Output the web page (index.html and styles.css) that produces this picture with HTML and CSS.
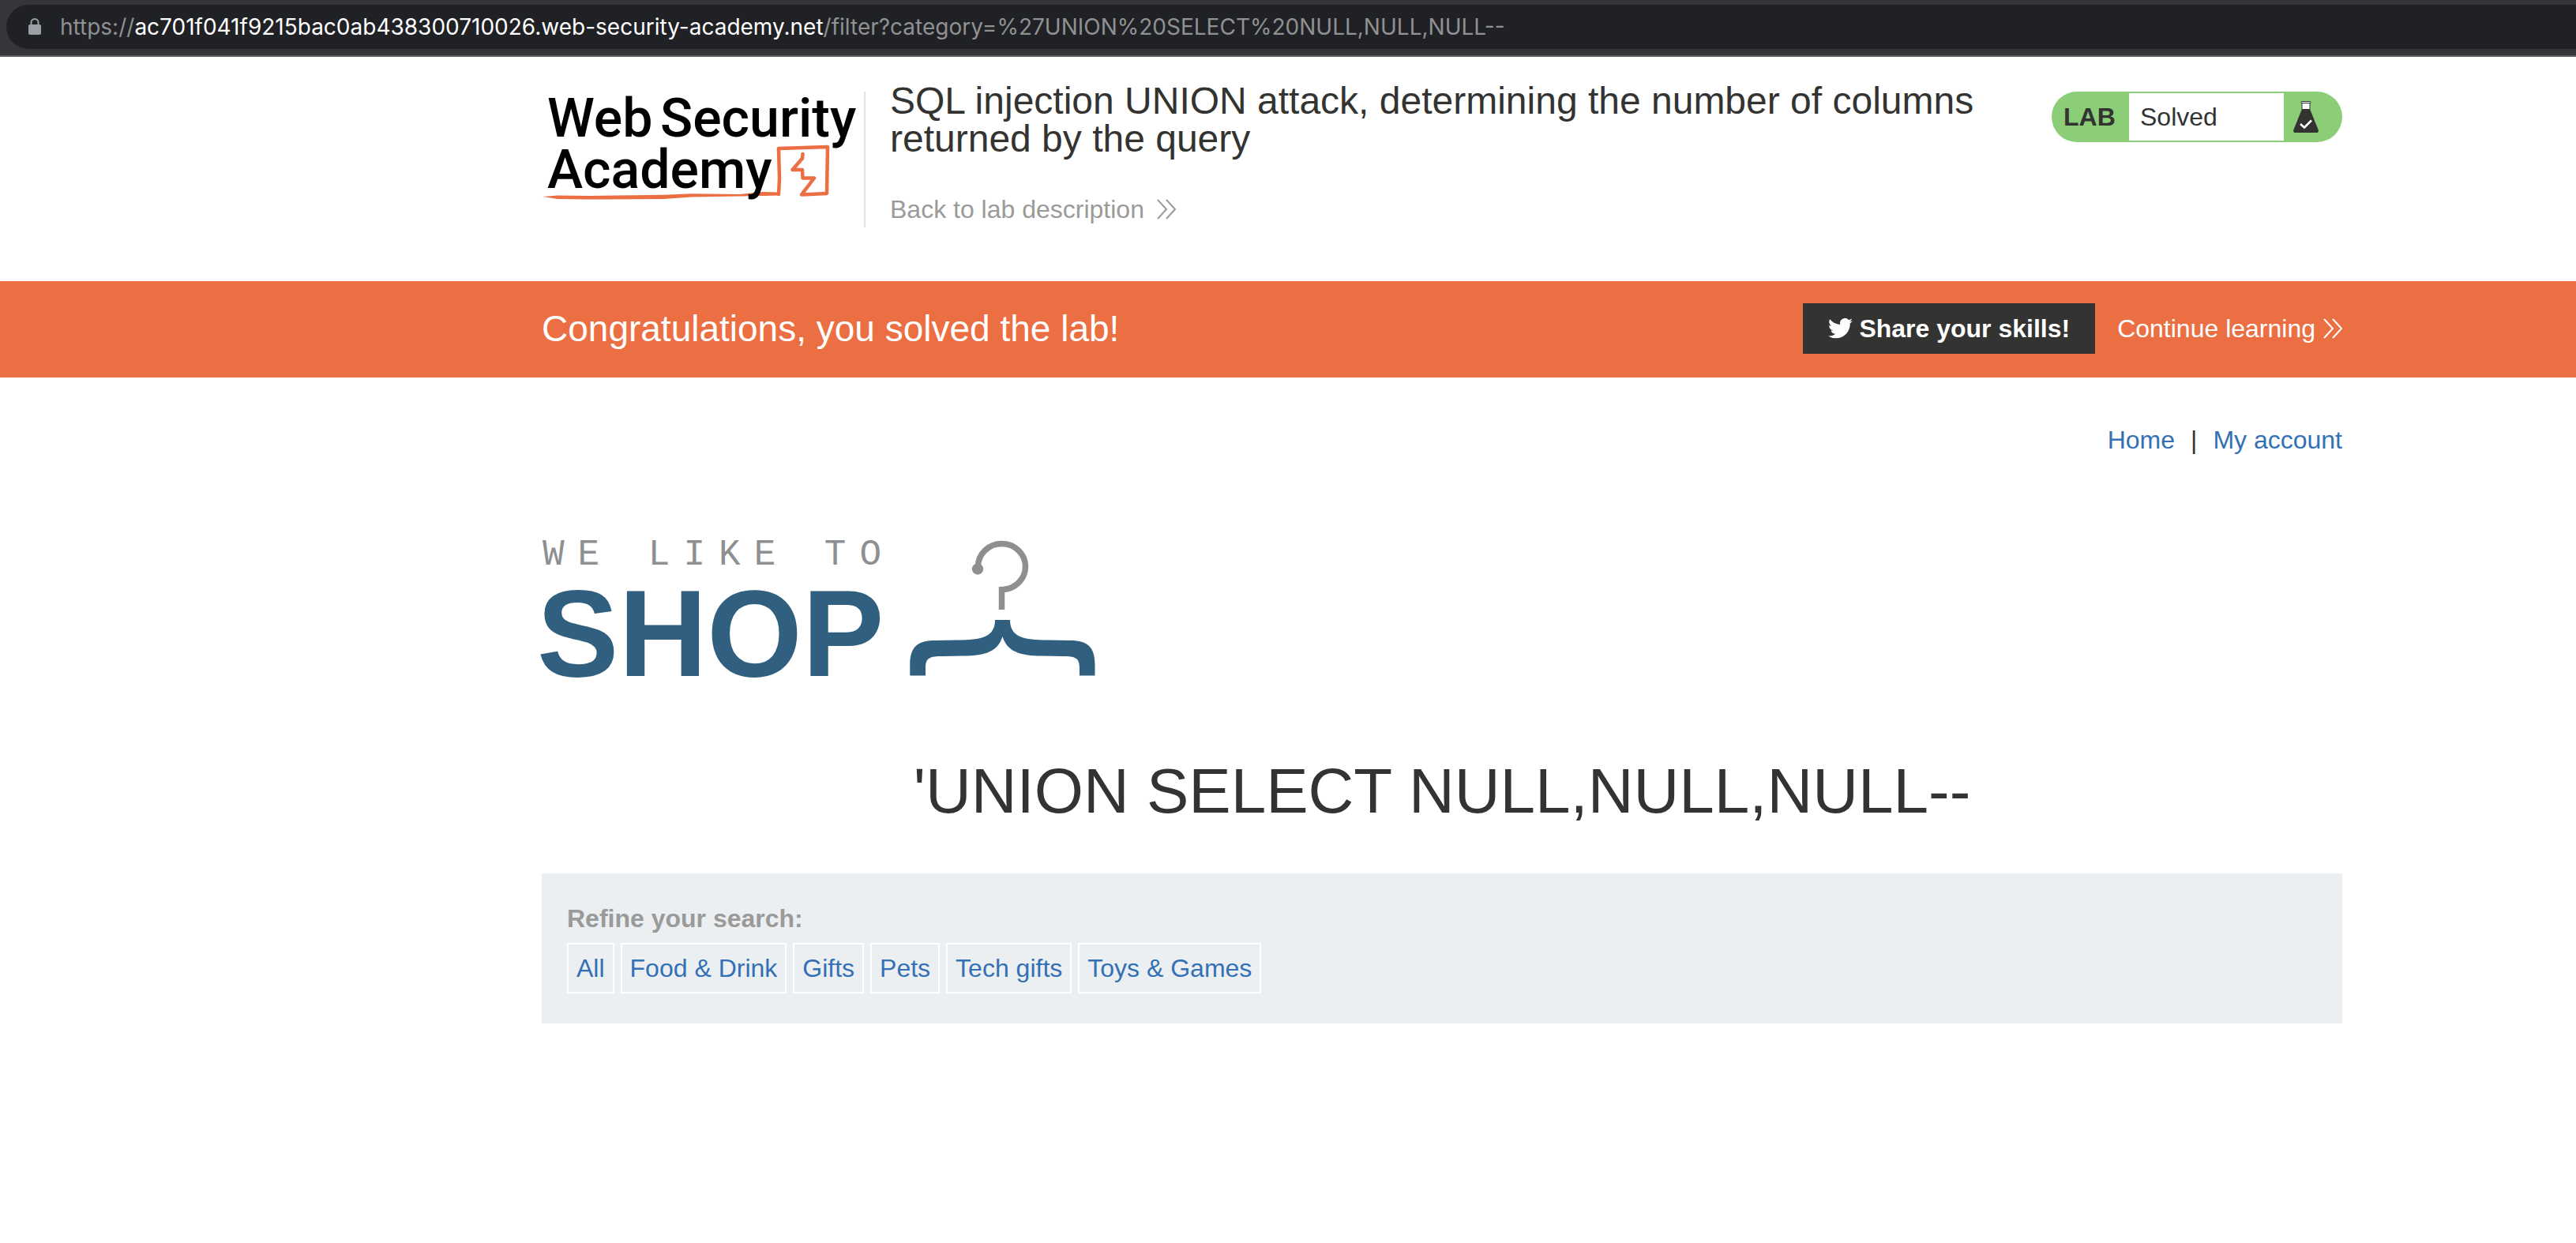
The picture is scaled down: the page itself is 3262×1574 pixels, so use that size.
FILE: index.html
```html
<!DOCTYPE html>
<html lang="en">
<head>
<meta charset="utf-8">
<title>SQL injection UNION attack, determining the number of columns returned by the query</title>
<link rel="stylesheet" href="styles.css">
</head>
<body>
<div class="browser-bar">
  <div class="address">
    <svg class="lock" viewBox="0 0 16 22" aria-hidden="true"><path d="M3.500 10V5.500a4.500 4.500 0 0 1 9 0V10" fill="none" stroke="#9aa0a6" stroke-width="2"/><rect x="0" y="8" width="16" height="13" rx="2" fill="#9aa0a6"/></svg>
    <span class="url">https://<span class="host">ac701f041f9215bac0ab438300710026.web-security-academy.net</span>/filter?category=%27UNION%20SELECT%20NULL,NULL,NULL--</span>
  </div>
</div>

<header class="band">
  <div class="content lab-header">
    <svg class="academy-logo" viewBox="0 0 400 144" role="img" aria-label="Web Security Academy">
      <g fill="none" stroke="#eb6f43" stroke-linecap="round" stroke-linejoin="round">
        <path d="M300 130L301 110L300 72L362 70L361 129L329 130.500L345 109.500L330.500 109.500L330 99L317.500 99L330 84.500L330.500 79" stroke-width="4.500"/>
      </g>
      <path d="M1.500 133L20 131.500L60 132L154 130.800L190 129.300L250 130L280 127L302 127.500L302 131.500L280 132L190 133.500L154 136L60 136.500L20 136Z" fill="#eb6f43"/>
      <text class="academy-text" y="57"><tspan x="7">Web</tspan><tspan x="150">Security</tspan></text>
      <text class="academy-text" x="7" y="122">Academy</text>
    </svg>
    <div class="title-block">
      <h2 class="lab-title">SQL injection UNION attack, determining the number of columns returned by the query</h2>
      <a class="back-link" href="#">Back to lab description
        <svg class="chevrons" viewBox="0 0 24 26" aria-hidden="true"><path d="M1 1l11 12L1 25M12 1l11 12L12 25"/></svg></a>
    </div>
    <div class="lab-status">
      <span class="lab-tag">LAB</span>
      <span class="lab-state">Solved</span>
      <svg class="flask" viewBox="0 0 32 40" aria-hidden="true">
        <path d="M11 1.500v9h10v-9z" fill="#fff" stroke="#333332"/>
        <rect x="10" y="0.500" width="12" height="2" rx="1" fill="#fff" stroke="#333332"/>
        <path d="M11 10h10l10.700 26.500q.8 3.500-2.700 3.500H3q-3.500 0-2.700-3.500z" fill="#333332"/>
        <path d="M9 29l5 4.500L23 24.500" fill="none" stroke="#fff" stroke-width="2.500"/>
      </svg>
    </div>
  </div>
</header>

<section class="band banner">
  <div class="content banner-row">
    <p class="congrats">Congratulations, you solved the lab!</p>
    <button class="share" type="button">
      <svg class="bird" viewBox="0 0 24 20" aria-hidden="true"><path fill="#fff" d="M24 2.400a9.800 9.800 0 0 1-2.800.8A4.900 4.900 0 0 0 23.300.400a9.900 9.900 0 0 1-3.100 1.200 4.900 4.900 0 0 0-8.400 4.500A14 14 0 0 1 1.700.900a4.900 4.900 0 0 0 1.500 6.600 4.900 4.900 0 0 1-2.200-.6v.1a4.900 4.900 0 0 0 3.900 4.800 4.900 4.900 0 0 1-2.200.1 4.900 4.900 0 0 0 4.600 3.400A9.900 9.900 0 0 1 0 17.300a13.900 13.900 0 0 0 7.500 2.200c9.100 0 14-7.500 14-14v-.600A10 10 0 0 0 24 2.400z"/></svg>
      Share your skills!
    </button>
    <a class="continue" href="#">Continue learning
      <svg class="chevrons" viewBox="0 0 24 26" aria-hidden="true"><path d="M1 1l11 12L1 25M12 1l11 12L12 25"/></svg></a>
  </div>
</section>

<main class="band">
  <div class="content shop">
    <nav class="top-links">
      <a href="#">Home</a><span>|</span><a href="#">My account</a>
    </nav>
    <svg class="shop-logo" viewBox="0 0 702 180" role="img" aria-label="We like to shop">
      <text class="tagline" x="1" y="35">WE LIKE TO</text>
      <text class="shop-word" x="-6" y="176">SHOP</text>
      <path d="M552.500 37.500A30 29 0 1 1 582.500 66.500M582.500 63V92" fill="none" stroke="#8d8f91" stroke-width="7.500"/>
      <circle cx="552" cy="40.500" r="7.200" fill="#8d8f91"/>
      <path fill="#305f80" d="M466.300 175.500V162C466.300 140 475 131 498 131L527 130.500C556 130.500 574 127 574 105H593C593 127 611 130.500 640 130.500L669 131C692 131 700.500 140 700.500 162V175.500H681V166C681 153 676 151 659 151L633 150.600C604 150.600 589 144 583.500 126C578 144 563 150.600 534 150.600L508 151C491 151 486 153 486 166V175.500Z"/>
    </svg>
    <h1 class="category">'UNION SELECT NULL,NULL,NULL--</h1>
    <section class="filters">
      <p class="filters-label">Refine your search:</p>
      <div class="filter-list">
        <a href="#">All</a>
        <a href="#">Food &amp; Drink</a>
        <a href="#">Gifts</a>
        <a href="#">Pets</a>
        <a href="#">Tech gifts</a>
        <a href="#">Toys &amp; Games</a>
      </div>
    </section>
  </div>
</main>
</body>
</html>
```

FILE: styles.css
```css
* { box-sizing: border-box; }

body {
  margin: 0;
  background: #fff;
  color: #333332;
  font: 32px/40px "Liberation Sans", Arial, sans-serif;
}

h1, h2, p { margin: 0; font-weight: 400; }
a { color: #3470b5; text-decoration: none; }
svg { flex: none; }

/* Browser address bar */
.browser-bar {
  padding: 6px 0 8px 8px;
  background: #35363a;
  border-bottom: 2px solid #625d64;
}
.address {
  display: flex;
  align-items: center;
  gap: 24px;
  height: 56px;
  padding-left: 28px;
  border-radius: 28px 0 0 28px;
  background: #202124;
}
.lock { width: 16px; height: 22px; }
.url {
  color: #8f9193;
  font: 28px/40px Inter, Roboto, sans-serif;
  white-space: nowrap;
}
.host { color: #fff; }

/* Page bands share one column */
.band {
  display: grid;
  grid-template-columns: 686fr 2280fr 296fr;
}
.content { grid-column: 2; min-width: 0; }

/* Lab header */
.lab-header {
  display: flex;
  align-items: flex-start;
  padding: 32px 0 68px;
}
.academy-logo {
  width: 410px;
  height: 172px;
  margin-top: 12px;
  padding: 0 8px 28px 0;
  border-right: 2px solid #e2e2e2;
  overflow: visible;
}
.academy-text {
  font: 500 68px Roboto, sans-serif;
  fill: #000;
}
.title-block {
  flex: 1;
  padding-left: 31px;
}
.lab-title {
  max-width: 1400px;
  margin-bottom: 45px;
  font-size: 48px;
  line-height: 48px;
}
.back-link, .continue {
  display: inline-flex;
  align-items: center;
}
.back-link { gap: 16px; color: #9a9a98; }
.chevrons {
  width: 24px;
  height: 26px;
  fill: none;
  stroke: currentColor;
  stroke-width: 2;
}
.lab-status {
  display: flex;
  align-items: center;
  width: 368px;
  height: 64px;
  margin-top: 12px;
  padding: 2px 30px 2px 0;
  border-radius: 32px;
  background: #8cce78;
}
.lab-tag {
  width: 98px;
  padding-left: 15px;
  font-weight: 700;
}
.lab-state {
  flex: 1;
  margin-right: 12px;
  padding-left: 14px;
  background: #fff;
  line-height: 60px;
}
.flask { width: 32px; height: 40px; }

/* Solved banner */
.banner { background: #eb6f43; color: #fff; }
.banner-row {
  display: flex;
  align-items: center;
  padding: 28px 0 30px;
}
.congrats {
  flex: 1;
  font-size: 46px;
  line-height: 64px;
}
.share {
  display: flex;
  align-items: center;
  gap: 8px;
  height: 64px;
  margin-right: 28px;
  padding: 0 32px;
  border: 0;
  background: #333332;
  color: #fff;
  font: 700 32px/40px "Liberation Sans", Arial, sans-serif;
}
.bird { width: 31px; height: 26px; }
.continue { gap: 10px; color: #fff; }

/* Shop */
.top-links {
  display: flex;
  justify-content: flex-end;
  gap: 20px;
  padding-top: 59px;
}
.shop-logo {
  display: block;
  width: 702px;
  height: 180px;
  margin: 103px 0 102px;
  overflow: visible;
}
.tagline {
  font: 46px "Liberation Mono", monospace;
  letter-spacing: 17px;
  fill: #8d8f91;
}
.shop-word {
  font: 700 155px "Liberation Sans", Arial, sans-serif;
  fill: #305f80;
}
.category {
  margin-bottom: 64px;
  font-size: 80px;
  line-height: 80px;
  text-align: center;
}
.filters {
  padding: 37px 32px 38px;
  background: #ebeff2;
}
.filters-label {
  margin-bottom: 11px;
  color: #9a9a98;
  font-weight: 700;
}
.filter-list {
  display: flex;
  flex-wrap: wrap;
  gap: 8px;
}
.filter-list a {
  padding: 10px;
  border: 2px solid #fff;
}
```
